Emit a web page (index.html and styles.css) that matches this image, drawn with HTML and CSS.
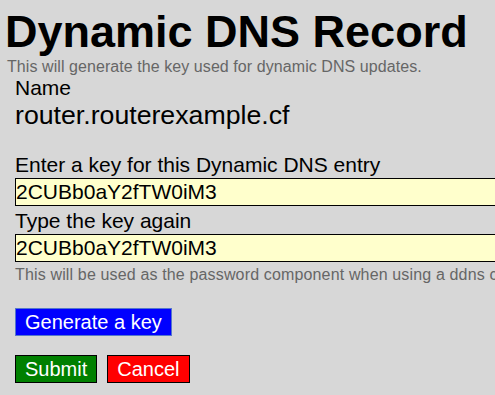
FILE: index.html
```html
<!DOCTYPE html>
<html lang="en">
<head>
<meta charset="UTF-8">
<meta name="viewport" content="width=device-width, initial-scale=1.0">
<title>Dynamic DNS Record</title>
<link rel="stylesheet" href="styles.css">
</head>
<body>
    <div class="page">
        <h1 class="title">Dynamic DNS Record</h1>
        <p class="lead">This will generate the key used for dynamic DNS updates.</p>
        <form class="ddns_form" onsubmit="return false">
            <div class="field">
                <div class="field_label">Name</div>
                <div class="field_value">router.routerexample.cf</div>
            </div>
            <div class="field keys">
                <label for="key1">Enter a key for this Dynamic DNS entry</label>
                <input id="key1" type="text" value="2CUBb0aY2fTW0iM3">
                <label for="key2">Type the key again</label>
                <input id="key2" type="text" value="2CUBb0aY2fTW0iM3">
                <p class="hint">This will be used as the password component when using a ddns client to update this record.</p>
            </div>
            <div class="gen_row">
                <button type="button" class="btn btn_blue">Generate a key</button>
            </div>
            <div class="actions">
                <button type="submit" class="btn btn_green">Submit</button>
                <button type="button" class="btn btn_red">Cancel</button>
            </div>
        </form>
    </div>
</body>
</html>
```

FILE: styles.css
```css
*{margin:0;padding:0;box-sizing:border-box}
html,body{overflow:hidden}
body{background:#d7d7d7;color:#000;font-family:"Liberation Sans",Arial,sans-serif;font-size:16px}
.page {padding-top: 6px; width: 495px; overflow: hidden;}
.title {font-size: 45px; font-weight: bold; line-height: normal; margin-left: 5px;}
.lead {color: #666; font-size: 16px; letter-spacing: 0.07px; margin-left: 7px;}
.ddns_form {padding-left: 15px;}
.field_label {font-size: 21px;}
.field_value {font-size: 26.7px;}
.keys {margin-top: 22px;}
.keys label {display: block; font-size: 21px; line-height: 24px; margin-top: 3px; margin-bottom: 1px;}
.keys input {display: block; width: 520px; height: 28px; border: 1px solid #000; background: #ffffcc; font-family: inherit; font-size: 21px; padding: 0; color: #000; outline: none;}
.hint {color: #666; font-size: 16px; letter-spacing: 0.15px; margin-top: 4px; white-space: nowrap;}
.gen_row {margin-top: 24px;}
.actions {display: flex; gap: 10px; margin-top: 19px;}
.btn {height: 28px; padding: 0 9px; font-family: inherit; font-size: 20px; color: #fff; border: 1px solid #000; cursor: pointer;}
.btn_blue {background: #0000ff; border-color: #5577cc;}
.btn_green {background: #008000;}
.btn_red {background: #ff0000;}
```
